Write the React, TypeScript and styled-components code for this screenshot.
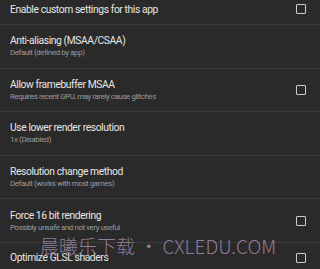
import React from "react";
import styled, { createGlobalStyle } from "styled-components";

const Global = createGlobalStyle`
  html, body { margin: 0; padding: 0; background: #2a2a2a; }
  body { width: 320px; height: 269px; overflow: hidden; font-family: Roboto, "Noto Sans", sans-serif; }
`;

const Screen = styled.div`
  position: relative;
  width: 320px;
  height: 269px;
  overflow: hidden;
  background: #2a2a2a;
`;

const List = styled.div`
  display: flex;
  flex-direction: column;
  margin-top: -6px;
`;

const Row = styled.div<{ $two: boolean }>`
  display: flex;
  align-items: center;
  box-sizing: border-box;
  height: ${(p) => (p.$two ? "43.6px" : "31px")};
  padding: 0 14px 0 10px;
  border-bottom: 1px solid #3b3b3b;
`;

const Texts = styled.div`
  flex: 1;
  display: flex;
  flex-direction: column;
  gap: 1px;
  min-width: 0;
`;

const Title = styled.div`
  color: #e6e6e6;
  font-size: 10.3px;
  line-height: 13px;
  letter-spacing: -0.4px;
  white-space: nowrap;
`;

const Summary = styled.div`
  color: #9a9a9a;
  font-size: 7.9px;
  line-height: 10px;
  letter-spacing: -0.4px;
  white-space: nowrap;
`;

const Box = styled.div`
  width: 8px;
  height: 8px;
  border: 1.6px solid #cfcfcf;
  border-radius: 1px;
  flex: none;
`;

const Watermark = styled.div`
  position: absolute;
  left: 40px;
  top: 235px;
  color: rgba(178, 152, 188, 0.75);
  font-family: "Noto Sans CJK SC", Roboto, sans-serif;
  font-weight: 300;
  font-size: 19px;
  line-height: 22px;
  white-space: nowrap;
  pointer-events: none;
`;

type Item = { title: string; summary?: string; check?: boolean };

const items: Item[] = [
  { title: "Enable custom settings for this app", check: true },
  { title: "Anti-aliasing (MSAA/CSAA)", summary: "Default (defined by app)" },
  { title: "Allow framebuffer MSAA", summary: "Requires recent GPU, may rarely cause glitches", check: true },
  { title: "Use lower render resolution", summary: "1x (Disabled)" },
  { title: "Resolution change method", summary: "Default (works with most games)" },
  { title: "Force 16 bit rendering", summary: "Possibly unsafe and not very useful", check: true },
  { title: "Optimize GLSL shaders", check: true },
];

export default function App() {
  return (
    <Screen>
      <Global />
      <List>
        {items.map((it) => (
          <Row key={it.title} $two={!!it.summary}>
            <Texts>
              <Title>{it.title}</Title>
              {it.summary && <Summary>{it.summary}</Summary>}
            </Texts>
            {it.check && <Box />}
          </Row>
        ))}
      </List>
      <Watermark>晨曦乐下载 • CXLEDU.COM</Watermark>
    </Screen>
  );
}
